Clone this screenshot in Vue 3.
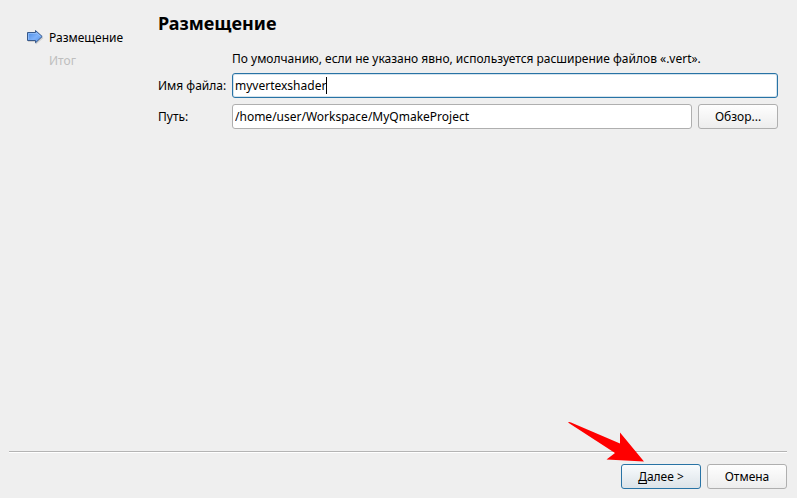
<script setup>
import { ref, onMounted } from 'vue'

const fileName = ref('myvertexshader')
const path = ref('/home/user/Workspace/MyQmakeProject')
const nameInput = ref(null)

onMounted(() => {
  const end = fileName.value.length
  nameInput.value.focus()
  nameInput.value.setSelectionRange(end, end)
})
</script>

<template>
  <form class="wizard" @submit.prevent>
    <div class="body">
      <nav class="steps">
        <ol>
          <li class="current" aria-current="step">
            <svg class="step-icon" width="18" height="16" viewBox="0 0 18 16" aria-hidden="true">
              <defs>
                <linearGradient id="step-fill" x1="0" y1="0" x2="1" y2="1">
                  <stop offset="0" stop-color="#4486e0" />
                  <stop offset="0.55" stop-color="#7fb2fa" />
                  <stop offset="1" stop-color="#4a8ae0" />
                </linearGradient>
              </defs>
              <path d="M2 6H10V3L17.5 9L10 15.5V13H2Z" fill="#000" opacity="0.13" />
              <path d="M1.5 3.5H9.5V1.5L16.2 7.5L9.5 13.8V11.5H1.5Z" fill="url(#step-fill)" stroke="#38598a" />
              <path d="M2.5 10.5V4.5H10.5V3.8L14.7 7.5" fill="none" stroke="#a5ccff" opacity="0.6" />
            </svg>
            <span>Размещение</span>
          </li>
          <li class="pending"><span>Итог</span></li>
        </ol>
      </nav>

      <main class="page">
        <h1>Размещение</h1>
        <div class="fields">
          <p class="hint">По умолчанию, если не указано явно, используется расширение файлов «.vert».</p>
          <label for="file-name">Имя файла:</label>
          <div class="entry">
            <input id="file-name" ref="nameInput" v-model="fileName" type="text" />
            <span class="caret" aria-hidden="true"></span>
          </div>
          <label for="file-path">Путь:</label>
          <div class="path-row">
            <input id="file-path" v-model="path" type="text" />
            <button type="button">Обзор...</button>
          </div>
        </div>
      </main>
    </div>

    <footer class="actions">
      <div class="next">
        <button type="submit" class="primary"><u>Д</u>алее &gt;</button>
        <svg class="pointer" width="78" height="41" viewBox="0 0 78 41" aria-hidden="true">
          <path d="M1 1.5Q2 0.5 4 1.5L53 22.5V11.5L77 40.5L39.5 38.5L48 32Z" fill="#f00" />
        </svg>
      </div>
      <button type="button">Отмена</button>
    </footer>
  </form>
</template>

<style>
body {
  background: #efefef;
}
</style>

<style scoped>
.wizard {
  box-sizing: border-box;
  display: flex;
  flex-direction: column;
  min-height: 100vh;
  padding: 9px 10px 9px 9px;
  font: 12px/17px "Noto Sans", sans-serif;
  color: #000;
}

.body {
  display: flex;
  flex: 1;
}

.steps {
  flex: none;
  width: 149px;
}

ol {
  display: grid;
  gap: 6px;
  margin: 0;
  padding: 20px 0 0 40px;
  list-style: none;
}

li {
  display: flex;
}

.step-icon {
  flex: none;
  margin-left: -23px;
  margin-right: 5px;
}

.pending {
  color: #bebebe;
}

.page {
  flex: 1;
  min-width: 0;
  padding-right: 9px;
}

h1 {
  margin: 0 0 12px;
  font-size: 18px;
  line-height: 29px;
}

.fields {
  display: grid;
  grid-template-columns: 68px 1fr;
  column-gap: 6px;
  row-gap: 6px;
  align-items: center;
}

.hint {
  grid-column: 2;
  margin: 0;
}

label {
  white-space: nowrap;
}

.entry {
  position: relative;
  display: flex;
}

.path-row {
  display: flex;
  gap: 6px;
}

input {
  box-sizing: border-box;
  flex: 1;
  min-width: 0;
  height: 25px;
  padding: 0 2px;
  border: 1px solid #afafaf;
  border-radius: 3px;
  background: #fff;
  color: #000;
  font: inherit;
  outline: none;
}

#file-name {
  border-color: #2873a5;
  box-shadow: inset 0 0 0 1px #d4e3ed;
  caret-color: transparent;
}

.caret {
  position: absolute;
  top: 4px;
  left: 94px;
  width: 1px;
  height: 17px;
  background: #000;
}

button {
  box-sizing: border-box;
  width: 80px;
  height: 25px;
  padding: 0;
  border: 1px solid #afafaf;
  border-radius: 3px;
  background: linear-gradient(#fefefe, #ededed);
  color: #000;
  font: inherit;
}

.primary {
  border-color: #2873a5;
  background: linear-gradient(#f8fbfd, #dce3e8);
}

u {
  text-underline-offset: 2px;
}

.actions {
  display: flex;
  justify-content: flex-end;
  gap: 6px;
  padding-top: 12px;
  border-top: 1px solid #b4b4b4;
  box-shadow: inset 0 1px #fff;
}

.next {
  position: relative;
}

.pointer {
  position: absolute;
  left: -54px;
  top: -43px;
  pointer-events: none;
}
</style>
